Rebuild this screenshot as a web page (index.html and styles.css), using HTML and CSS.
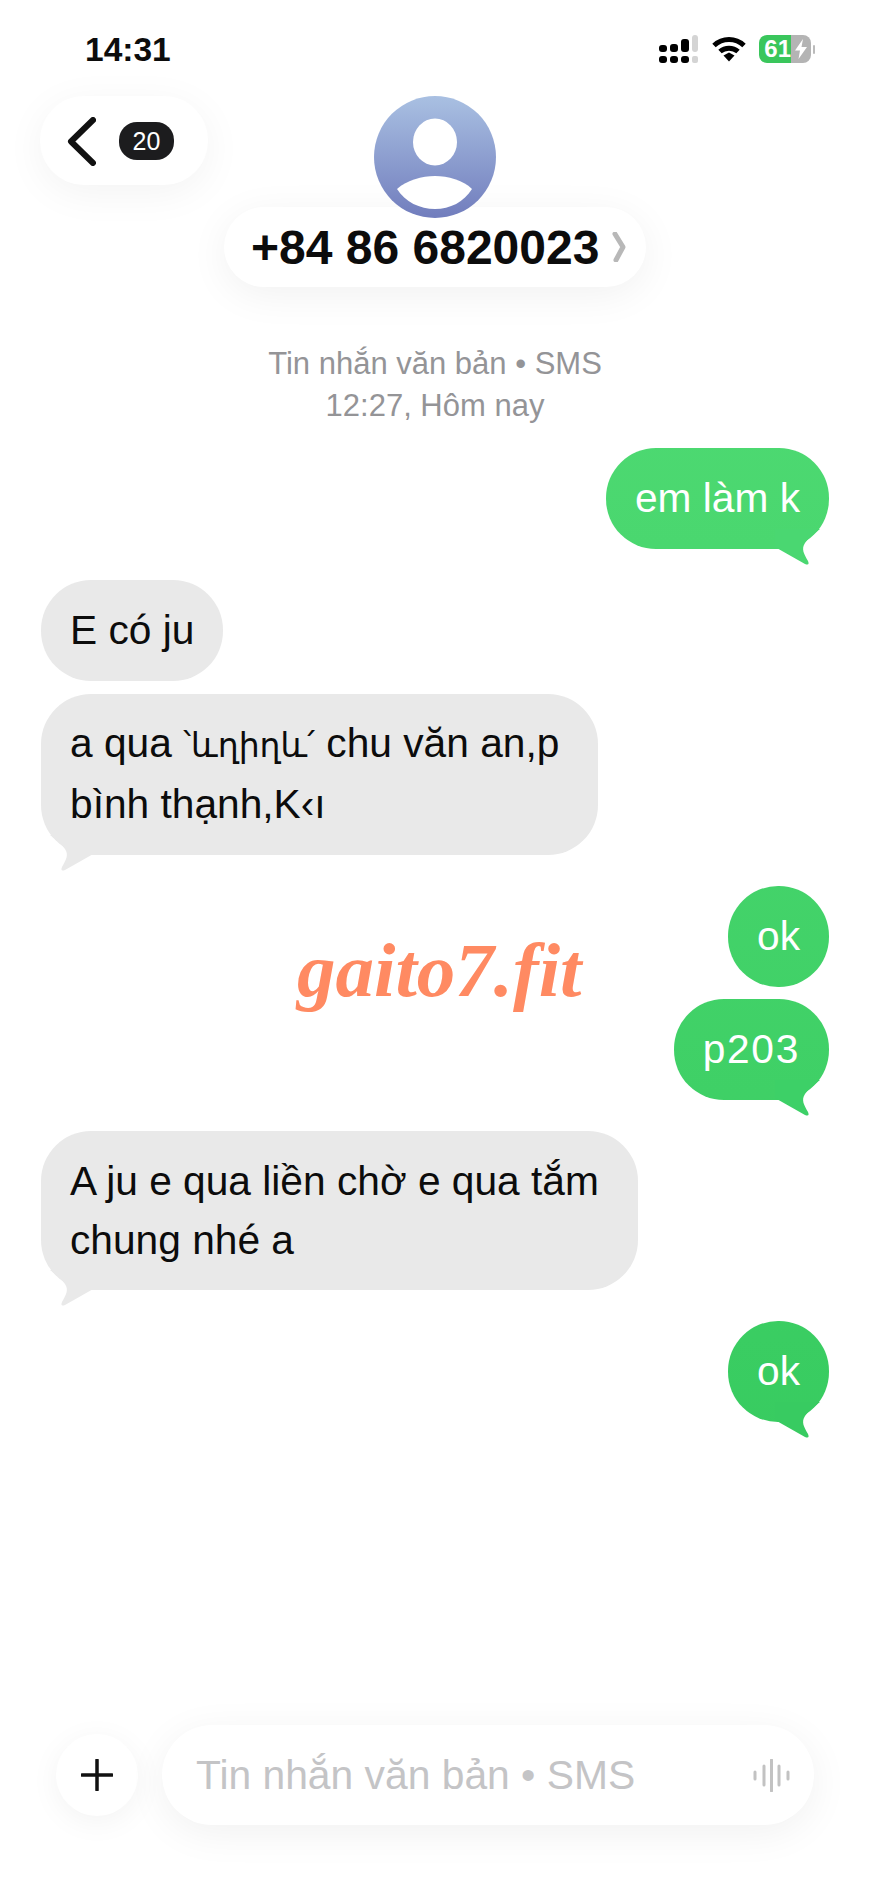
FILE: index.html
```html
<!DOCTYPE html>
<html lang="vi">
<head>
  <meta charset="UTF-8">
  <meta name="viewport" content="width=device-width, initial-scale=1.0">
  <title>Tin nhắn</title>
  <link rel="stylesheet" href="styles.css">
</head>
<body>
  <div class="status">
    <span class="time">14:31</span>
    <div class="status-icons">
      <svg class="signal" width="39" height="28" viewBox="0 0 39 28">
        <rect x="0" y="10" width="8" height="7" rx="3"/>
        <rect x="0" y="21" width="8" height="7" rx="3"/>
        <rect x="11" y="9" width="8" height="8" rx="3"/>
        <rect x="11" y="21" width="8" height="7" rx="3"/>
        <rect x="22" y="4" width="8" height="13" rx="3"/>
        <rect x="22" y="21" width="8" height="7" rx="3"/>
        <rect class="off" x="33" y="0" width="6" height="17" rx="3"/>
        <rect class="off" x="33" y="21" width="6" height="7" rx="2"/>
      </svg>
      <svg class="wifi" width="34" height="26" viewBox="0 0 34 26">
        <path d="M2 9.500C10.500 1.500 23.500 1.500 32 9.500" />
        <path d="M8 15.500C13 11 21 11 26 15.500" />
        <path class="dot" d="M11.500 19.500L17 16.500L22.500 19.500L17 25.500Z" />
      </svg>
      <div class="battery">
        <div class="battery-level">61</div>
        <div class="battery-rest">
          <svg width="14" height="20" viewBox="0 0 14 20"><path d="M9 0L1 11.500H6L4.500 20L13 8H7.500Z" fill="#fff"/></svg>
        </div>
      </div>
      <span class="battery-nub"></span>
    </div>
  </div>

  <header class="head">
    <div class="back">
      <svg width="29" height="49" viewBox="0 0 29 49"><path d="M26 3L4 24.500L26 46" fill="none" stroke="#111" stroke-width="6" stroke-linecap="round" stroke-linejoin="round"/></svg>
      <span class="badge">20</span>
    </div>
    <div class="contact">
      <svg class="avatar" width="122" height="122" viewBox="0 0 122 122">
        <defs>
          <linearGradient id="avatarFill" x1="0" y1="0" x2="0" y2="1">
            <stop offset="0" stop-color="#a9c0e2"/>
            <stop offset="1" stop-color="#717dbd"/>
          </linearGradient>
        </defs>
        <circle cx="61" cy="61" r="61" fill="url(#avatarFill)"/>
        <ellipse cx="61" cy="46" rx="22" ry="23.500" fill="#fff"/>
        <path d="M23 93C33 84 48 80 61 80C74 80 89 84 98 93C90 106 76 113 61 113C46 113 31 106 23 93Z" fill="#fff"/>
      </svg>
      <div class="name">
        <span>+84 86 6820023</span>
        <svg width="15" height="30" viewBox="0 0 15 30"><path d="M3 2L11 15L4 28" fill="none" stroke="#b8b8b8" stroke-width="5" stroke-linecap="round" stroke-linejoin="round"/></svg>
      </div>
    </div>
  </header>

  <main class="thread">
    <p class="meta">Tin nhắn văn bản • SMS<br>12:27, Hôm nay</p>

    <div class="bubble sent gap-sm tail-1">em làm k
      <svg class="tail" width="60" height="50" viewBox="0 0 60 50"><path d="M6 28L36 45Q41 47 39 42C35 35 32 30 36 24C40 18 46 14 51 10L6 10Z"/></svg>
    </div>

    <div class="bubble recv gap-lg">E có ju</div>
    <div class="bubble recv long gap-xs">a qua <span class="garbled">՝ևղիղև՛</span> chu văn an,p<br>bình thạnh,K‹ı
      <svg class="tail" width="60" height="50" viewBox="0 0 60 50"><path d="M6 28L36 45Q41 47 39 42C35 35 32 30 36 24C40 18 46 14 51 10L6 10Z"/></svg>
    </div>

    <div class="bubble sent gap-lg">ok</div>
    <div class="bubble sent digits gap-xs tail-2">p203
      <svg class="tail" width="60" height="50" viewBox="0 0 60 50"><path d="M6 28L36 45Q41 47 39 42C35 35 32 30 36 24C40 18 46 14 51 10L6 10Z"/></svg>
    </div>

    <div class="bubble recv long gap-lg">A ju e qua liền chờ e qua tắm<br>chung nhé a
      <svg class="tail" width="60" height="50" viewBox="0 0 60 50"><path d="M6 28L36 45Q41 47 39 42C35 35 32 30 36 24C40 18 46 14 51 10L6 10Z"/></svg>
    </div>

    <div class="bubble sent gap-lg tail-3">ok
      <svg class="tail" width="60" height="50" viewBox="0 0 60 50"><path d="M6 28L36 45Q41 47 39 42C35 35 32 30 36 24C40 18 46 14 51 10L6 10Z"/></svg>
    </div>
  </main>

  <div class="watermark">gaito7.fit</div>

  <footer class="composer">
    <div class="plus">
      <svg width="32" height="32" viewBox="0 0 32 32"><path d="M16 1V31M1 16H31" stroke="#111" stroke-width="3.500" stroke-linecap="round"/></svg>
    </div>
    <div class="input">
      <span>Tin nhắn văn bản • SMS</span>
      <svg width="37" height="33" viewBox="0 0 37 33"><path d="M2 13V20M11 7V26M18.500 1V32M26 7V26M35 13V20" stroke="#c2c2c2" stroke-width="3" stroke-linecap="round"/></svg>
    </div>
  </footer>
</body>
</html>
```

FILE: styles.css
```css
* {
  box-sizing: border-box;
}
body {
  margin: 0;
  height: 100vh;
  display: flex;
  flex-direction: column;
  position: relative;
  overflow: hidden;
  background-color: #fff;
  color: #0c0c0c;
  font-family: "Liberation Sans", Arial, sans-serif;
}

/* status bar */
.status {
  height: 96px;
  padding: 35px 55px 0 85px;
  display: flex;
  justify-content: space-between;
  align-items: flex-start;
}
.time {
  font-size: 33.500px;
  line-height: 30px;
  font-weight: 700;
}
.status-icons {
  display: flex;
  align-items: center;
}
.signal {
  fill: #000;
  margin-right: 14px;
}
.signal .off {
  fill: #d4d4d4;
}
.wifi {
  margin-right: 13px;
}
.wifi path {
  fill: none;
  stroke: #000;
  stroke-width: 5;
}
.wifi .dot {
  fill: #000;
  stroke: none;
}
.battery {
  width: 52px;
  height: 28px;
  border-radius: 8px;
  overflow: hidden;
  display: flex;
}
.battery-level {
  width: 32px;
  background-color: #3ac65c;
  color: #fff;
  font-size: 24px;
  font-weight: 700;
  line-height: 28px;
  text-align: right;
}
.battery-rest {
  flex: 1;
  background-color: #b4b4b4;
  display: flex;
  align-items: center;
  justify-content: center;
}
.battery-nub {
  width: 2px;
  height: 9px;
  margin-left: 2px;
  background-color: #bbb;
  border-radius: 1px;
}

/* header */
.head {
  display: grid;
  grid-template-columns: 1fr auto 1fr;
  padding: 0 40px;
  align-items: start;
}
.back {
  justify-self: start;
  width: 168px;
  height: 89px;
  padding: 21px 0 0 27px;
  display: flex;
  align-items: flex-start;
  gap: 23px;
  background-color: #fff;
  border-radius: 44px;
  box-shadow: 0 8px 40px rgba(0, 0, 0, 0.05);
}
.badge {
  width: 55px;
  height: 38px;
  margin-top: 5px;
  border-radius: 18px;
  background-color: #1c1c1e;
  color: #fff;
  font-size: 25px;
  line-height: 38px;
  text-align: center;
}
.contact {
  display: flex;
  flex-direction: column;
  align-items: center;
}
.avatar {
  display: block;
  position: relative;
  z-index: 1;
}
.name {
  width: 422px;
  height: 80px;
  margin-top: -11px;
  display: flex;
  align-items: center;
  padding-left: 27px;
  gap: 13px;
  background-color: #fff;
  border-radius: 40px;
  box-shadow: 0 8px 40px rgba(0, 0, 0, 0.06);
  font-size: 48px;
  font-weight: 700;
  white-space: nowrap;
}

/* messages */
.thread {
  flex: 1;
  display: flex;
  flex-direction: column;
  align-items: flex-start;
  padding: 56px 41px 0;
}
.meta {
  align-self: stretch;
  margin: 0;
  color: #949497;
  font-size: 31px;
  line-height: 42px;
  text-align: center;
}
.bubble {
  position: relative;
  padding: 21px 29px;
  font-size: 40.700px;
  line-height: 59px;
  border-radius: 50px;
  white-space: nowrap;
}
.long {
  padding: 20.500px 39px 20.500px 29px;
}
.digits {
  letter-spacing: 1.700px;
}
.garbled {
  font-family: "DejaVu Sans", sans-serif;
  font-size: 33px;
}
.recv {
  background-color: #e9e9e9;
  color: #0c0c0c;
}
.sent {
  align-self: flex-end;
  color: #fff;
  background: linear-gradient(#55de78, #2fc659) fixed;
}
.gap-xs {
  margin-top: 12.500px;
}
.gap-sm {
  margin-top: 21px;
}
.gap-lg {
  margin-top: 31px;
}
.tail {
  position: absolute;
  bottom: -20px;
  display: block;
}
.recv .tail {
  left: 0;
  fill: #e9e9e9;
  transform: scaleX(-1);
}
.sent .tail {
  right: 0;
}
.tail-1 .tail {
  fill: #4ad771;
}
.tail-2 .tail {
  fill: #3dd067;
}
.tail-3 .tail {
  fill: #38cb61;
}

/* overlay text over the thread */
.watermark {
  position: absolute;
  left: 297px;
  top: 925px;
  color: #ff8a62;
  font-family: "Liberation Serif", serif;
  font-size: 77px;
  font-style: italic;
  font-weight: 700;
  line-height: 90px;
}

/* input bar */
.composer {
  padding: 0 56px 58px;
  display: flex;
  align-items: center;
  gap: 24px;
}
.plus {
  width: 82px;
  height: 82px;
  flex: none;
  display: flex;
  align-items: center;
  justify-content: center;
  background-color: #fff;
  border-radius: 50%;
  box-shadow: 0 6px 30px rgba(0, 0, 0, 0.05);
}
.input {
  flex: 1;
  height: 100px;
  padding: 0 24px 0 34px;
  display: flex;
  align-items: center;
  justify-content: space-between;
  background-color: #fff;
  border-radius: 50px;
  box-shadow: 0 8px 40px rgba(0, 0, 0, 0.06);
  color: #c4c4c6;
  font-size: 40.800px;
}
```
